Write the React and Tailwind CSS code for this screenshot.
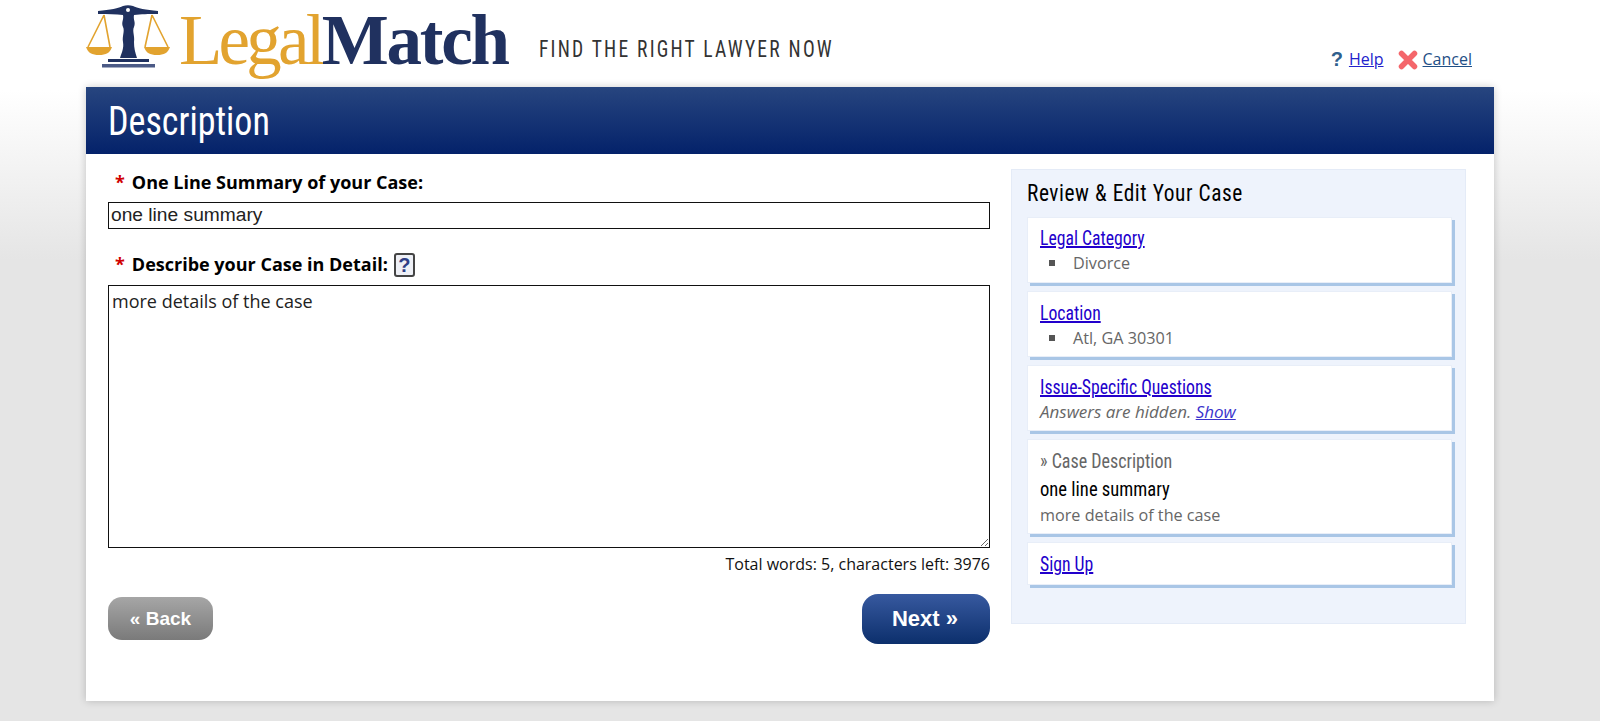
import React from "react";

const oswald = "font-['Liberation_Sans_Narrow','Roboto_Condensed','Liberation_Sans',sans-serif]";

// scales part of the logo
const ScalesLogo = () => (
  <svg width="84" height="63" viewBox="0 0 84 63" className="shrink-0">
    <g fill="none" stroke="#e2a32f" strokeWidth="1.6">
      <path d="M18 10 L2 42 M18 10 L24 42" />
      <path d="M66 10 L59 42 M66 10 L82 42" />
    </g>
    <path d="M0 42 H26 C24 48 20 50 13 50 C6 50 2 48 0 42 Z" fill="#e2a32f" />
    <path d="M58 42 H84 C82 48 78 50 71 50 C64 50 60 48 58 42 Z" fill="#e2a32f" />
    <path
      d="M12 6 C24 5 33 3 37 1 C40 0 44 0 47 1 C51 3 60 5 72 6 L72 9 C62 9 55 9 48 10 C47 15 50 17 48 22 C46 26 49 31 48 37 C48 43 49 47 51 53 H34 C36 47 38 43 37 37 C36 31 39 26 37 22 C35 17 38 15 37 10 C30 9 22 9 12 9 Z"
      fill="#20315f"
    />
    <circle cx="42" cy="5" r="2" fill="#fff" />
    <rect x="22" y="54" width="41" height="3" fill="#20315f" />
    <rect x="16" y="59" width="53" height="3.5" fill="#4b5a86" />
  </svg>
);

const ReviewCard = ({ children, className = "" }) => (
  <div
    className={`bg-white pl-3 pr-3 border border-[#e8eef8] shadow-[3px_3px_0_#a9c6e6] ${className}`}
  >
    {children}
  </div>
);

const CardLink = ({ text }) => (
  <a
    href="#"
    className={`${oswald} block w-max origin-left scale-x-[0.885] text-[20px] leading-[27px] text-[#2200cc] underline`}
  >
    {text}
  </a>
);

const Bullet = ({ text }) => (
  <div className="flex items-center pl-[9px] text-[16.2px] leading-[22px] text-[#666]">
    <span className="w-[6px] h-[6px] bg-[#555] mr-[18px]"></span>
    {text}
  </div>
);

const App = () => {
  return (
    <div className="h-[721px] overflow-hidden bg-[linear-gradient(#ffffff_90px,#e5e5e5_260px)] font-['Open_Sans',sans-serif]">
      <div className="w-[1408px] ml-[86px]">
        {/* header */}
        <div className="h-[87px] flex relative">
          <div className="flex items-start pt-[5px]">
            <ScalesLogo />
            <div className="font-['Liberation_Serif',serif] text-[71px] leading-[76px] -mt-[3px] ml-[9px] whitespace-nowrap">
              <span className="text-[#e2a32f] tracking-[-3.8px]">Legal</span>
              <span className="text-[#20315f] font-bold tracking-[-2.2px]">Match</span>
            </div>
            <div className={`${oswald} origin-left scale-x-[0.85] text-[23px] tracking-[2.6px] text-[#333] ml-[31px] mt-[28px] whitespace-nowrap`}>
              FIND THE RIGHT LAWYER NOW
            </div>
          </div>
          <div className="ml-auto mr-[22px] mt-[47px] flex items-center h-[23px] text-[16px]">
            <span className="font-['Liberation_Sans',sans-serif] font-bold text-[20px] text-[#2f5f8d] mr-[6px]">?</span>
            <a href="#" className="text-[#2222cc] underline">Help</a>
            <svg width="20" height="20" viewBox="0 0 20 20" className="ml-[14px] mr-[5px] mt-[3px]">
              <path d="M3.5 3.5 L16.5 16.5 M16.5 3.5 L3.5 16.5" stroke="#f4666b" strokeWidth="5.5" strokeLinecap="round" />
            </svg>
            <a href="#" className="text-[#1f4f86] underline">Cancel</a>
          </div>
        </div>

        {/* card */}
        <div className="h-[614px] bg-white shadow-[0_0_8px_rgba(0,0,0,0.2)]">
          <div className="h-[67px] bg-[linear-gradient(#27457f,#04226a)] pl-[22px] pt-[3px] flex items-center">
            <h1 className={`${oswald} origin-left scale-x-[0.9] text-[40px] text-white`}>Description</h1>
          </div>
          <div className="flex pl-[22px] pr-[28px] pt-[15px]">
            {/* form */}
            <div className="w-[882px]">
              <div className="h-[33px] pl-[7px] pb-[6px] flex items-center text-[18px] font-bold text-black">
                <span className="text-[#d00000] mr-[7px]">*</span>
                One Line Summary of your Case:
              </div>
              <input
                defaultValue="one line summary"
                className="block w-full h-[27px] border border-[#111] px-[2px] font-['Liberation_Sans',sans-serif] text-[19.2px] text-[#222] outline-none"
              />
              <div className="h-[46px] mt-[10px] pl-[7px] pt-[5px] flex items-center text-[18px] font-bold text-black">
                <span className="text-[#d00000] mr-[7px]">*</span>
                Describe your Case in Detail:
                <span className="ml-[6px] w-[21px] h-[24px] border-2 border-[#444] rounded-[3px] bg-[#eef0f6] flex items-center justify-center font-['Liberation_Sans',sans-serif] text-[20px] font-bold text-[#2f3f86]">
                  ?
                </span>
              </div>
              <textarea
                defaultValue="more details of the case"
                className="block w-full h-[263px] border border-[#111] px-[3px] py-[3px] text-[18px] leading-[24px] text-[#222] outline-none"
              ></textarea>
              <div className="mt-[4px] text-right text-[16px] leading-[24px] text-[#111]">
                Total words: 5, characters left: 3976
              </div>
              <div className="flex justify-between items-start mt-[18px]">
                <button className="mt-[3px] w-[105px] h-[43px] pt-[2px] rounded-[14px] bg-[linear-gradient(#a6a6a6,#7a7a7a)] font-['Liberation_Sans',sans-serif] text-[19px] font-bold text-white">
                  « Back
                </button>
                <button className="w-[128px] h-[50px] pb-[2px] pr-[2px] rounded-[16px] bg-[linear-gradient(#37599f,#0c2f6c)] font-['Liberation_Sans',sans-serif] text-[22px] font-bold text-white">
                  Next »
                </button>
              </div>
            </div>

            {/* review panel */}
            <div className="w-[455px] h-[455px] ml-[21px] bg-[#eef3fc] border border-[#e4ebf7] pl-[15px] pr-[13px]">
              <div className={`${oswald} origin-left scale-x-[0.93] w-max text-[23px] leading-[30px] tracking-[0.6px] text-black mt-[9px] mb-[8px]`}>
                Review &amp; Edit Your Case
              </div>
              <div className="flex flex-col gap-[8px]">
                <ReviewCard className="h-[66px] pt-[7px]">
                  <CardLink text="Legal Category" />
                  <Bullet text="Divorce" />
                </ReviewCard>
                <ReviewCard className="h-[66px] pt-[8px]">
                  <CardLink text="Location" />
                  <Bullet text="Atl, GA 30301" />
                </ReviewCard>
                <ReviewCard className="h-[66px] pt-[8px]">
                  <CardLink text="Issue-Specific Questions" />
                  <div className="text-[17px] leading-[22px] italic text-[#666]">
                    Answers are hidden.{" "}
                    <a href="#" className="text-[#3a33cc] underline">Show</a>
                  </div>
                </ReviewCard>
                <ReviewCard className="h-[95px] pt-[7px]">
                  <div className={`${oswald} origin-left scale-x-[0.9] w-max text-[20px] leading-[28px] text-[#666]`}>» Case Description</div>
                  <div className={`${oswald} origin-left scale-x-[0.93] w-max text-[20px] leading-[28px] text-black`}>one line summary</div>
                  <div className="text-[16.2px] leading-[24px] text-[#666]">more details of the case</div>
                </ReviewCard>
                <ReviewCard className="h-[43px] pt-[8px]">
                  <CardLink text="Sign Up" />
                </ReviewCard>
              </div>
            </div>
          </div>
        </div>
      </div>
    </div>
  );
};

export default App;
